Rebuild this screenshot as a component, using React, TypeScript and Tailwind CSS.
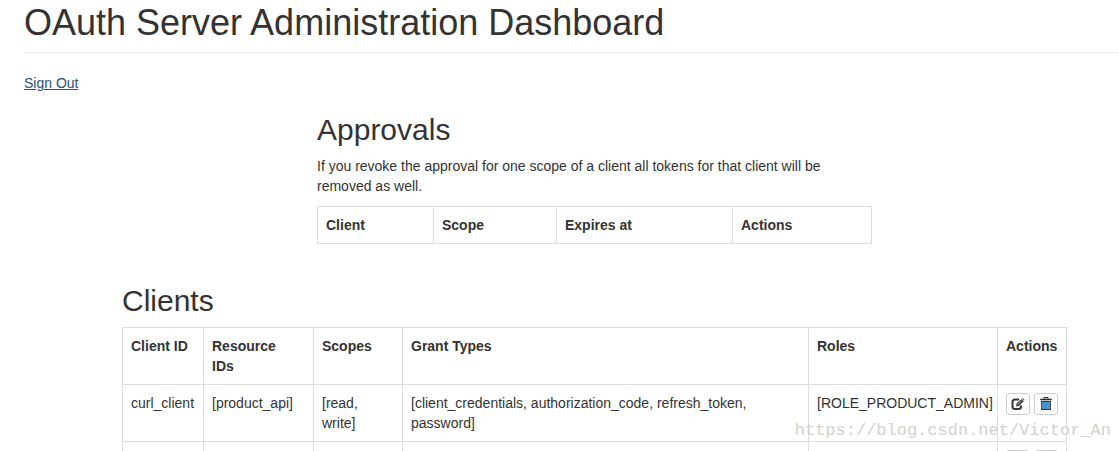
import type { ReactNode } from "react";

function EditIcon() {
  return (
    <svg viewBox="0 0 14 12" className="h-3 w-3.5" fill="none" aria-hidden="true">
      <path
        d="M8 1.5H4Q1.5 1.5 1.5 4V8.5Q1.5 11 4 11H7.5Q10 11 10 8.5V7.5"
        stroke="#333333"
        strokeWidth="2"
      />
      <path d="M5 8.5L5.6 5.6L10.4 0.9L12.8 3.2L8 7.9Z" fill="#333333" />
      <path d="M6.4 6.9L10.6 2.8" stroke="#ffffff" strokeWidth="0.7" />
      <path d="M11 0.4L11.6 0L13.7 2L13.2 2.6Z" fill="#333333" />
    </svg>
  );
}

function TrashIcon() {
  return (
    <svg viewBox="0 0 12 14" className="h-3.5 w-3" fill="none" aria-hidden="true">
      <path d="M4 2V0.5H8V2" stroke="#333333" />
      <path d="M0.5 3V2H11.5V3Z" fill="#333333" stroke="#333333" strokeWidth="0.6" />
      <path d="M1 4H11V13H1Z" fill="#4f94cd" />
      <path d="M1 4H11V5H1Z M1 12H11V13H1Z" fill="#333333" />
      <path d="M1.5 5V12M10.5 5V12" stroke="#4a4a4a" />
      <path d="M3.5 5V12M5.5 5V12M7.5 5V12" stroke="#8a8078" strokeWidth="0.8" />
    </svg>
  );
}

function IconButton({ label, children }: { label: string; children: ReactNode }) {
  return (
    <button
      type="button"
      aria-label={label}
      className="flex h-[22px] w-6 items-center justify-center rounded-[3px] border border-[#cccccc] bg-white hover:bg-[#e6e6e6]"
    >
      {children}
    </button>
  );
}

const head = "border border-[#dddddd] p-2 text-left align-top font-bold";
const cell = "border border-[#dddddd] p-2 align-top";

const clients = [
  {
    id: "curl_client",
    resources: "[product_api]",
    scopes: "[read, write]",
    grants: "[client_credentials, authorization_code, refresh_token, password]",
    roles: "[ROLE_PRODUCT_ADMIN]",
  },
  { id: "", resources: "", scopes: "", grants: "", roles: "" },
];

export default function App() {
  return (
    <div className="relative h-screen overflow-hidden bg-white pt-[3px] pl-6 font-['Liberation_Sans',Arial,sans-serif] text-sm leading-5 text-[#333333]">
      <header className="mb-5 border-b border-[#eeeeee] pb-[9px]">
        <h1 className="text-4xl leading-10">OAuth Server Administration Dashboard</h1>
      </header>
      <nav className="flex">
        <a href="#signout" className="text-[#23527c] underline">
          Sign Out
        </a>
      </nav>

      <main className="mr-[52px] ml-[98px]">
        <section className="mx-auto mt-5 max-w-[555px]">
          <h2 className="mb-2.5 text-3xl leading-[33px]">Approvals</h2>
          <p className="mb-2.5">
            If you revoke the approval for one scope of a client all tokens for that client will be
            removed as well.
          </p>
          <table className="w-full table-fixed border-collapse">
            <thead>
              <tr>
                <th className={`${head} w-[116px]`}>Client</th>
                <th className={`${head} w-[123px]`}>Scope</th>
                <th className={`${head} w-[176px]`}>Expires at</th>
                <th className={head}>Actions</th>
              </tr>
            </thead>
          </table>
        </section>

        <section className="mt-10">
          <h2 className="mb-2.5 text-3xl leading-[33px]">Clients</h2>
          <table className="w-full table-fixed border-collapse">
            <thead>
              <tr>
                <th className={`${head} w-[81px]`}>Client ID</th>
                <th className={`${head} w-[110px]`}>
                  Resource
                  <br />
                  IDs
                </th>
                <th className={`${head} w-[89px]`}>Scopes</th>
                <th className={head}>Grant Types</th>
                <th className={`${head} w-[189px]`}>Roles</th>
                <th className={`${head} w-[69px]`}>Actions</th>
              </tr>
            </thead>
            <tbody>
              {clients.map((client, index) => (
                <tr key={index}>
                  <td className={cell}>{client.id}</td>
                  <td className={cell}>{client.resources}</td>
                  <td className={cell}>{client.scopes}</td>
                  <td className={cell}>{client.grants}</td>
                  <td className={cell}>{client.roles}</td>
                  <td className={cell}>
                    <div className="flex gap-1">
                      <IconButton label="Edit client">
                        <EditIcon />
                      </IconButton>
                      <IconButton label="Delete client">
                        <TrashIcon />
                      </IconButton>
                    </div>
                  </td>
                </tr>
              ))}
            </tbody>
          </table>
        </section>
      </main>

      <span className="pointer-events-none absolute right-2 bottom-2 font-['Liberation_Mono',monospace] text-[17px] leading-6 text-[#d2d2ce]">
        https://blog.csdn.net/Victor_An
      </span>
    </div>
  );
}
